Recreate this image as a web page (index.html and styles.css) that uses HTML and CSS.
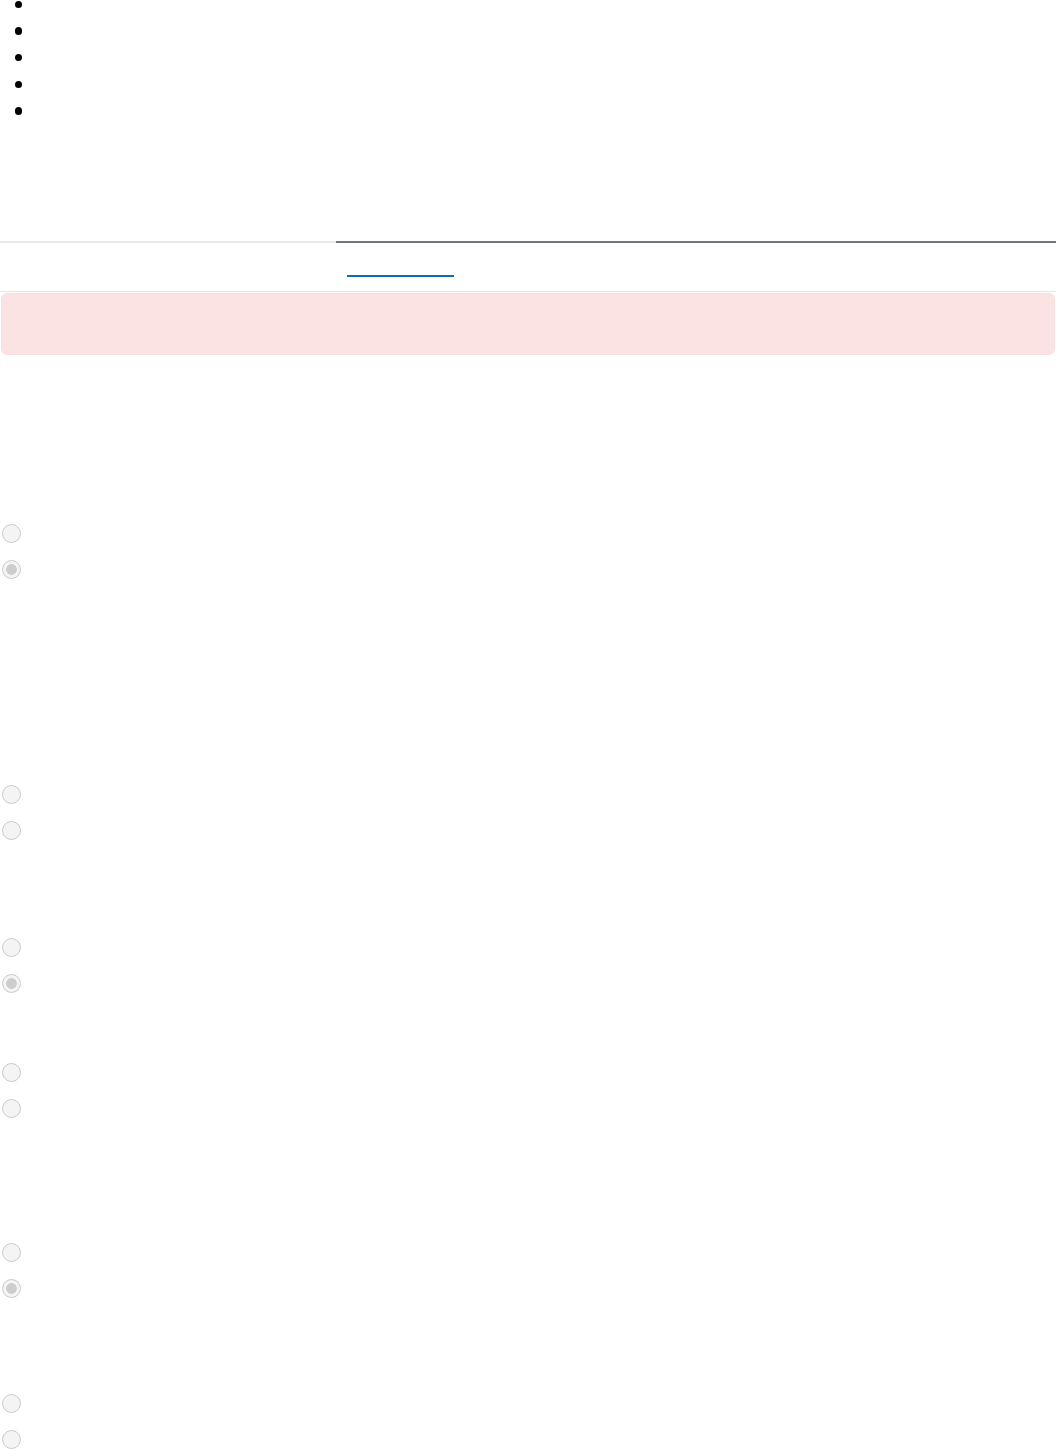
FILE: index.html
```html
<!DOCTYPE html>
<html lang="en">
<head>
<meta charset="utf-8">
<title>Form</title>
<link rel="stylesheet" href="styles.css">
</head>
<body>
<ul class="bullets">
  <li></li>
  <li></li>
  <li></li>
  <li></li>
  <li></li>
</ul>

<nav class="tabs">
  <div class="tab"></div>
  <div class="tab tab-active"><a class="tab-link" href="#"></a></div>
</nav>

<div class="alert"></div>

<form class="form">
  <fieldset class="group g1">
    <label class="row"><input type="radio" name="q1" disabled></label>
    <label class="row"><input type="radio" name="q1" checked disabled></label>
  </fieldset>
  <fieldset class="group g2">
    <label class="row"><input type="radio" name="q2" disabled></label>
    <label class="row"><input type="radio" name="q2" disabled></label>
  </fieldset>
  <fieldset class="group g3">
    <label class="row"><input type="radio" name="q3" disabled></label>
    <label class="row"><input type="radio" name="q3" checked disabled></label>
  </fieldset>
  <fieldset class="group g4">
    <label class="row"><input type="radio" name="q4" disabled></label>
    <label class="row"><input type="radio" name="q4" disabled></label>
  </fieldset>
  <fieldset class="group g5">
    <label class="row"><input type="radio" name="q5" disabled></label>
    <label class="row"><input type="radio" name="q5" checked disabled></label>
  </fieldset>
  <fieldset class="group g6">
    <label class="row"><input type="radio" name="q6" disabled></label>
    <label class="row"><input type="radio" name="q6" disabled></label>
  </fieldset>
</form>
</body>
</html>
```

FILE: styles.css
```css
* { box-sizing: border-box; }

html, body {
  margin: 0;
  padding: 0;
  background: #ffffff;
  font-family: "Liberation Sans", Arial, sans-serif;
  overflow: hidden;
}

.bullets {
  list-style: none;
  margin: -9px 0 0 0;
  padding: 0;
}

.bullets li {
  height: 26.67px;
  display: flex;
  align-items: center;
}

.bullets li::before {
  content: "";
  display: block;
  width: 7.5px;
  height: 7.5px;
  border-radius: 50%;
  background: #000;
  margin-left: 14.5px;
}

.tabs {
  margin-top: 116.7px;
  display: grid;
  grid-template-columns: 336px 1fr;
  border-bottom: 1px solid #e6e6e6;
}

.tab {
  border-top: 2px solid #e8e8e8;
  height: 50px;
}

.tab-active {
  border-top-color: #6b7783;
  padding-left: 11px;
}

.tab-link {
  display: block;
  width: 107px;
  height: 34px;
  border-bottom: 2px solid #0b6db3;
}

.alert {
  margin: 1px 1px 0 1px;
  height: 62px;
  border-radius: 6px;
  background: #fbe3e4;
  border: 1px solid #f8dfe0;
}

.form {
  margin: 0;
  padding: 0;
}

.group {
  border: 0;
  margin: 0;
  padding: 0;
  min-width: 0;
}

.g1 { margin-top: 160.3px; }
.g2 { margin-top: 189.2px; }
.g3 { margin-top: 81.3px; }
.g4 { margin-top: 53px; }
.g5 { margin-top: 107.4px; }
.g6 { margin-top: 79.3px; }

.row {
  display: flex;
  align-items: center;
  height: 36px;
  padding-left: 1.5px;
}

.row input {
  appearance: none;
  -webkit-appearance: none;
  width: 19px;
  height: 19px;
  margin: 0;
  border-radius: 50%;
  border: 1.5px solid #cacaca;
  background: #f4f4f4;
}

.row input:checked {
  background: radial-gradient(circle, #cdcdcd 0 5px, #f4f4f4 5.6px);
}
```
